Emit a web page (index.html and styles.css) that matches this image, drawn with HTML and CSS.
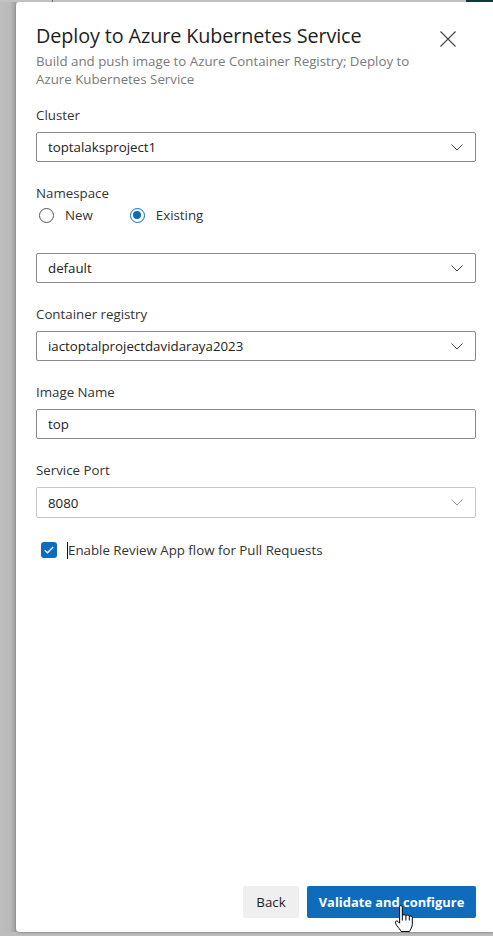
FILE: index.html
```html
<!DOCTYPE html>
<html lang="en">
<head>
<meta charset="utf-8">
<title>Deploy to Azure Kubernetes Service</title>
<link rel="stylesheet" href="styles.css">
</head>
<body>
<div class="topstrip"><span class="tick"></span><span class="teal"></span></div>
<div class="stage">
  <div class="gutter"></div>
  <div class="panel">
    <div class="header">
      <div class="titles">
        <h1 class="title">Deploy to Azure Kubernetes Service</h1>
        <p class="subtitle">Build and push image to Azure Container Registry; Deploy to Azure Kubernetes Service</p>
      </div>
      <button class="close" aria-label="Close">
        <svg width="16" height="16" viewBox="0 0 16 16"><path d="M0.5 0.5L15.5 15.5M15.5 0.5L0.5 15.5" stroke="#444" stroke-width="1.1" fill="none"/></svg>
      </button>
    </div>

    <div class="form">
      <div class="field first">
        <div class="label">Cluster</div>
        <div class="select">
          <span class="value">toptalaksproject1</span>
          <svg class="chev" width="12" height="7" viewBox="0 0 12 7"><path d="M0.5 0.5L6 6L11.5 0.5" stroke="#444" stroke-width="1" fill="none"/></svg>
        </div>
      </div>

      <div class="field">
        <div class="label tight">Namespace</div>
        <div class="radios">
          <label class="radio"><span class="circle"></span><span>New</span></label>
          <label class="radio"><span class="circle on"><span class="dot"></span></span><span>Existing</span></label>
        </div>
        <div class="select">
          <span class="value">default</span>
          <svg class="chev" width="12" height="7" viewBox="0 0 12 7"><path d="M0.5 0.5L6 6L11.5 0.5" stroke="#444" stroke-width="1" fill="none"/></svg>
        </div>
      </div>

      <div class="field">
        <div class="label">Container registry</div>
        <div class="select">
          <span class="value">iactoptalprojectdavidaraya2023</span>
          <svg class="chev" width="12" height="7" viewBox="0 0 12 7"><path d="M0.5 0.5L6 6L11.5 0.5" stroke="#444" stroke-width="1" fill="none"/></svg>
        </div>
      </div>

      <div class="field">
        <div class="label">Image Name</div>
        <div class="select input">
          <span class="value">top</span>
        </div>
      </div>

      <div class="field">
        <div class="label">Service Port</div>
        <div class="select light">
          <span class="value">8080</span>
          <svg class="chev" width="12" height="7" viewBox="0 0 12 7"><path d="M0.5 0.5L6 6L11.5 0.5" stroke="#999" stroke-width="1" fill="none"/></svg>
        </div>
      </div>

      <label class="check">
        <span class="box"><svg width="10" height="8" viewBox="0 0 10 8"><path d="M0.8 4.2L3.5 6.8L9.2 1" stroke="#fff" stroke-width="1.3" fill="none"/></svg></span>
        <span class="caret"></span><span class="checktext">Enable Review App flow for Pull Requests</span>
      </label>
    </div>

    <div class="footer">
      <button class="btn back">Back</button>
      <button class="btn primary">Validate and configure</button>
      <svg class="hand" width="20" height="29" viewBox="0 0 20 29">
        <path d="M6.5 1.5c1 0 1.8.8 1.8 1.8v8.2c.3-.9 3.4-1.1 3.6.3.4-1 3.2-1 3.4.6.5-.8 3-.6 3 1.2v6.6c0 2.6-1.8 5.2-2.8 7.3H7.2c-.8-1.6-2.6-3.7-4.2-5.7-.9-1.2-1.700-2.8-1.5-3.9.2-1.1 1.7-1.3 2.6-.3l1.5 1.6V3.3c0-1 .4-1.8.9-1.8z" fill="#fff" stroke="#000" stroke-width="1" stroke-linejoin="round"/>
        <path d="M8.3 11.5v5M11.9 11.8v4.7M15.3 12.4v4.1" stroke="#000" stroke-width="1" fill="none"/>
      </svg>
    </div>
  </div>
</div>
</body>
</html>
```

FILE: styles.css
```css
* { box-sizing: border-box; }
html, body { margin: 0; padding: 0; }
body {
  width: 493px;
  height: 936px;
  overflow: hidden;
  background: #bdbdbd;
  font-family: "Open Sans", "Noto Sans", "Liberation Sans", sans-serif;
  color: #222;
}
.topstrip {
  height: 2px;
  position: relative;
  background: #c2c2c2;
}
.tick {
  position: absolute;
  left: 52px;
  top: 0;
  width: 1px;
  height: 3px;
  background: #6a6a6a;
}
.teal {
  position: absolute;
  right: 0;
  top: 0;
  width: 27px;
  height: 2px;
  background: #0d3b3b;
}
.stage {
  display: flex;
  height: 930px;
}
.gutter {
  width: 16px;
  flex: none;
  background: linear-gradient(to right, #bebebe 0, #bababa 10px, #a9a9a9 14px, #9c9c9c 16px);
}
.panel {
  flex: 1;
  background: #fff;
  border-radius: 4px 0 0 4px;
  display: flex;
  flex-direction: column;
  padding: 20px 17px 14px 20px;
  box-shadow: 0 1px 2px rgba(0,0,0,0.25);
  position: relative;
}
.header {
  display: flex;
  align-items: flex-start;
}
.titles { flex: 1; }
.title {
  margin: 0;
  font-size: 19.8px;
  line-height: 28px;
  font-weight: 400;
  color: #1e1e1e;
  letter-spacing: -0.1px;
}
.subtitle {
  margin: 2px 0 0;
  font-size: 13.3px;
  line-height: 18px;
  color: #7a7a7a;
  width: 395px;
}
.close {
  border: 0;
  background: none;
  padding: 0;
  margin: 9px 20px 0 0;
  width: 16px;
  height: 16px;
  display: flex;
}
.form {
  display: flex;
  flex-direction: column;
  flex: 1;
}
.field { margin-top: 21px; }
.field.first { margin-top: 17px; }
.label {
  font-size: 13.3px;
  line-height: 20px;
  color: #333;
  margin-bottom: 7px;
}
.label.tight { margin-bottom: 0; }
.select {
  height: 30px;
  border: 1px solid #8a8886;
  border-radius: 2px;
  display: flex;
  align-items: center;
  padding: 0 11px 0 11px;
}
.select.light { border-color: #c6c6c6; height: 31px; }
.value {
  flex: 1;
  font-size: 13.3px;
  color: #222;
}
.chev { flex: none; margin-right: 1px; }
.radios {
  display: flex;
  height: 24px;
  align-items: center;
  margin-bottom: 26px;
}
.radio {
  display: flex;
  align-items: center;
  font-size: 13.3px;
  color: #333;
  margin-left: 3px;
  margin-right: 34px;
}
.circle {
  width: 15px;
  height: 15px;
  border: 1px solid #555;
  border-radius: 50%;
  margin-right: 11px;
  display: flex;
  align-items: center;
  justify-content: center;
}
.circle.on { border-color: #0f6cbd; border-width: 1.5px; }
.dot {
  width: 8px;
  height: 8px;
  border-radius: 50%;
  background: #0f6cbd;
}
.check {
  display: flex;
  align-items: center;
  margin-top: 23px;
  padding-left: 5px;
  height: 18px;
}
.box {
  width: 16px;
  height: 16px;
  border-radius: 3px;
  background: #0f6cbd;
  display: flex;
  align-items: center;
  justify-content: center;
  margin-right: 10px;
}
.caret {
  width: 1px;
  height: 17px;
  background: #111;
}
.checktext {
  font-size: 13.3px;
  color: #333;
}
.footer {
  display: flex;
  justify-content: flex-end;
  gap: 8px;
  position: relative;
}
.btn {
  height: 32px;
  border: 0;
  border-radius: 2px;
  font-family: inherit;
  font-size: 13.3px;
  padding: 0 16px;
}
.back {
  background: #efefef;
  color: #222;
  width: 56px;
  padding: 0;
}
.primary {
  background: #0f6cbd;
  color: #fff;
  font-weight: 700;
  font-size: 12.9px;
  width: 169px;
  padding: 0;
}
.hand {
  position: absolute;
  left: 358px;
  top: 18px;
}
```
